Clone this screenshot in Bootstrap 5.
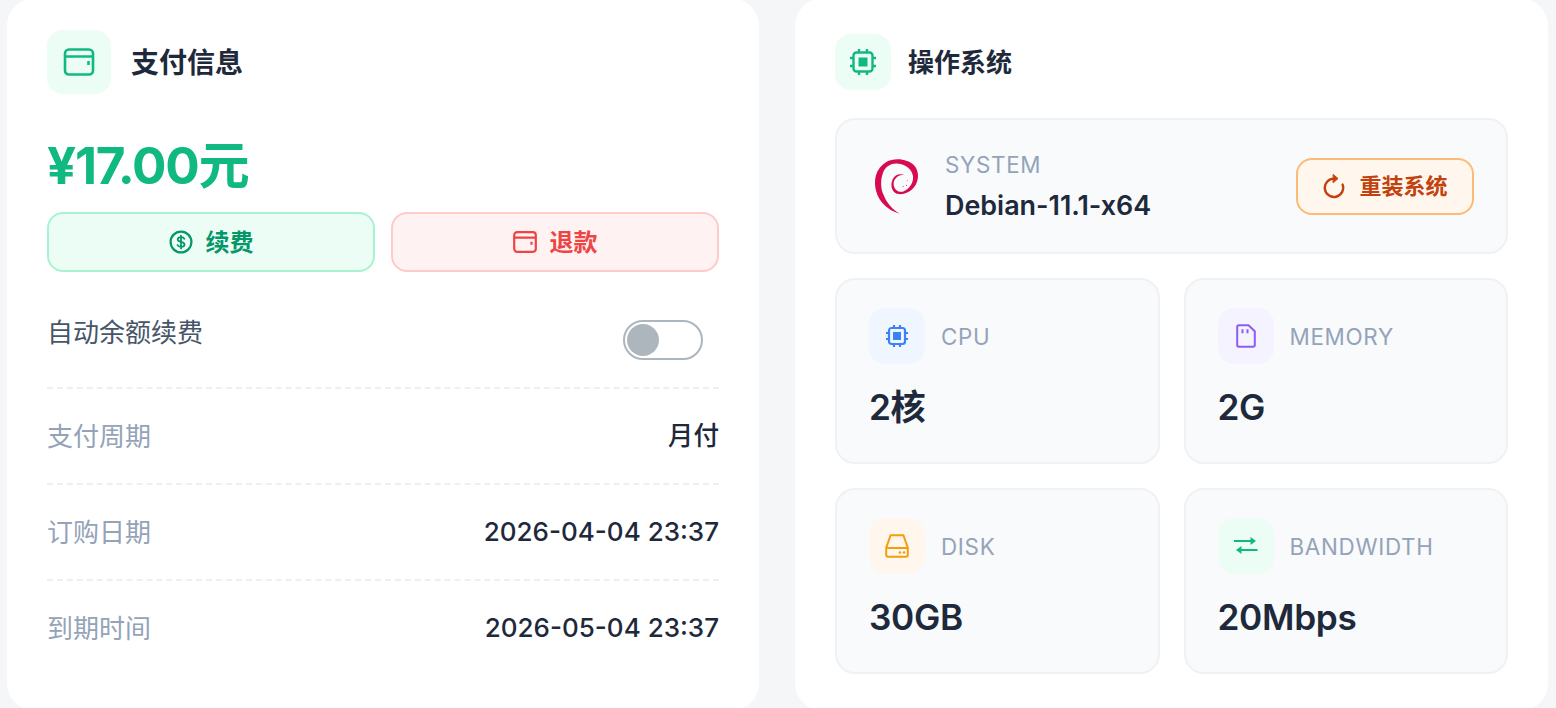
<!DOCTYPE html>
<html lang="zh-CN">
<head>
  <meta charset="UTF-8">
  <meta name="viewport" content="width=device-width, initial-scale=1.0">
  <title>支付信息</title>
  <link href="https://cdn.jsdelivr.net/npm/bootstrap@5.3.0/dist/css/bootstrap.min.css" rel="stylesheet">
  <style>
    html, body { height: 708px; overflow: hidden; }
    body { background: #f5f6f8; font-family: Inter, "Noto Sans CJK SC", sans-serif; color: #1e293b; }
    .panels { display: flex; gap: 36px; padding: 0 8px 0 7px; margin-top: -2px; }
    .panel { height: 713px; border: 0; border-radius: 28px; background: #fff; }
    .panel-left { flex: 0 0 752px; padding: 32px 40px; }
    .panel-right { flex: 1 1 0; padding: 36px 40px; }
    .head-icon { width: 64px; height: 64px; border-radius: 16px; background: #ecfdf5; color: #10b981; }
    .head-icon-sm { width: 56px; height: 56px; }
    .head-title { font-size: 28px; font-weight: 700; margin: 0 0 0 20px; padding-top: 4px; }
    .head-title-sm { font-size: 26px; margin-left: 17px; padding-top: 2px; }
    .price { font-size: 51.2px; font-weight: 700; letter-spacing: -0.025em; color: #10b981; line-height: 76px; margin: 33px 0 9px; }
    .act-btn { height: 60px; border-width: 2px; border-radius: 16px; font-size: 24px; font-weight: 700; gap: 13px; }
    .act-btn span { padding-top: 2px; }
    .act-green, .act-green:hover { background: #ecfdf5; border-color: #a7f3d0; color: #059669; }
    .act-red, .act-red:hover { background: #fef2f2; border-color: #fecaca; color: #ef4444; }
    .auto-row { margin-top: 42px; padding-bottom: 27px; border-bottom: 2px dashed #edf0f3; font-size: 26px; color: #475569; line-height: 38px; }
    .switch-wrap { margin: 6px 16px 0 0; padding: 0; min-height: 0; }
    .switch-wrap .form-check-input { width: 80px; height: 40px; margin: 0; float: none; display: block; border: 2px solid #adb5bd; background-image: url("data:image/svg+xml,%3csvg xmlns='http://www.w3.org/2000/svg' viewBox='-4 -4 8 8'%3e%3ccircle r='3.55' fill='%23adb5bd'/%3e%3c/svg%3e"); }
    .info-row { height: 96px; padding-bottom: 2px; font-size: 26px; border-bottom: 2px dashed #edf0f3; }
    .info-row:last-child { border-bottom-color: transparent; }
    .info-key { color: #94a3b8; padding-top: 2px; }
    .info-val { font-weight: 500; color: #1e293b; }
    .info-cjk { font-size: 25.6px; padding-top: 2px; }
    .sys-box { height: 136px; margin-top: 28px; padding: 0 32px 0 36px; background: #f8fafc; border: 2px solid #eff1f4; border-radius: 20px; }
    .sys-text { padding-top: 2px; }
    .sys-label { font-size: 22.4px; color: #94a3b8; letter-spacing: 0.7px; line-height: 30px; }
    .sys-name { font-size: 26.9px; font-weight: 600; line-height: 38px; margin-top: 6px; }
    .reinstall { height: 57px; width: 178px; border: 2px solid #fdba74; border-radius: 16px; background: #fff7ed; color: #c2410c; font-size: 22px; font-weight: 700; gap: 13px; padding: 0; }
    .reinstall:hover { background: #fff7ed; border-color: #fdba74; color: #c2410c; }
    .tiles { margin-top: 0; }
    .tile { height: 186px; padding: 28px 32px; background: #f8fafc; border: 2px solid #eff1f4; border-radius: 20px; }
    .tile-icon { width: 56px; height: 56px; border-radius: 16px; }
    .tile-label { font-size: 22.4px; color: #94a3b8; letter-spacing: 0.7px; margin-left: 16px; padding-top: 1px; }
    .tile-value { font-size: 35.2px; font-weight: 600; letter-spacing: -0.3px; line-height: 52px; margin-top: 17px; }
    .tone-blue { background: #eff6ff; color: #3b82f6; }
    .tone-purple { background: #f5f3ff; color: #8b5cf6; }
    .tone-orange { background: #fff7ed; color: #f59e0b; }
    .tone-green { background: #ecfdf5; color: #10b981; }
  </style>
</head>
<body>
  <div class="panels">
    <div class="card panel panel-left">
      <div class="d-flex align-items-center">
        <div class="head-icon d-flex align-items-center justify-content-center">
          <svg width="32" height="32" viewBox="0 0 32 32" fill="none" stroke="currentColor" stroke-width="2.6" stroke-linejoin="round"><rect x="2" y="3.5" width="28" height="25" rx="4"/><path d="M2 10.5h28M25.5 15v4"/></svg>
        </div>
        <h5 class="head-title">支付信息</h5>
      </div>
      <div class="price">¥17.00元</div>
      <div class="row g-3">
        <div class="col-6">
          <button class="btn act-btn act-green w-100 d-flex align-items-center justify-content-center">
            <svg width="24" height="24" viewBox="0 0 24 24" fill="none" stroke="currentColor" stroke-width="2.2" stroke-linecap="round"><circle cx="12" cy="12" r="10.4"/><path d="M15.4 8.8c-.5-1.1-1.8-1.7-3.4-1.7-1.9 0-3.3 1-3.3 2.4 0 3.2 6.8 1.7 6.8 5 0 1.4-1.5 2.4-3.5 2.4-1.7 0-3-.7-3.5-1.9M12 5.6v12.8" stroke-width="1.8"/></svg>
            <span>续费</span>
          </button>
        </div>
        <div class="col-6">
          <button class="btn act-btn act-red w-100 d-flex align-items-center justify-content-center">
            <svg width="24" height="22" viewBox="0 0 24 22" fill="none" stroke="currentColor" stroke-width="2.2" stroke-linejoin="round"><rect x="1.2" y="1.2" width="21.6" height="19.6" rx="3"/><path d="M1.2 6.6h21.6M18.5 10.8v3"/></svg>
            <span>退款</span>
          </button>
        </div>
      </div>
      <div class="auto-row d-flex justify-content-between align-items-start">
        <span>自动余额续费</span>
        <div class="form-check form-switch switch-wrap"><input class="form-check-input" type="checkbox" role="switch" aria-label="自动余额续费"></div>
      </div>
      <div class="info-row d-flex justify-content-between align-items-center"><span class="info-key">支付周期</span><span class="info-val info-cjk">月付</span></div>
      <div class="info-row d-flex justify-content-between align-items-center"><span class="info-key">订购日期</span><span class="info-val">2026-04-04 23:37</span></div>
      <div class="info-row d-flex justify-content-between align-items-center"><span class="info-key">到期时间</span><span class="info-val">2026-05-04 23:37</span></div>
    </div>

    <div class="card panel panel-right">
      <div class="d-flex align-items-center">
        <div class="head-icon head-icon-sm d-flex align-items-center justify-content-center">
          <svg width="28" height="28" viewBox="0 0 28 28" fill="none" stroke="currentColor" stroke-width="2.4"><rect x="4.5" y="4.5" width="19" height="19" rx="3"/><rect x="9.5" y="9.5" width="9" height="9" fill="currentColor" stroke="none"/><path d="M10 1v3M18 1v3M10 24v3M18 24v3M1 10h3M1 18h3M24 10h3M24 18h3"/></svg>
        </div>
        <h5 class="head-title head-title-sm">操作系统</h5>
      </div>
      <div class="sys-box d-flex align-items-center">
        <svg width="48" height="58" viewBox="40 35 145 175"><path fill="#d70a53" d="M120 206C90 198 60 175 50 140C40 105 48 70 80 50C105 36 146 40 166 62C180 80 179 106 165 125C152 143 128 151 112 146C96 140 92 120 99 103C106 88 122 83 136 90C124 87 112 92 104 106C98 122 108 139 122 140C140 141 158 122 161 101C163 80 147 62 124 56C100 50 78 60 70 83C62 105 63 130 72 150C82 175 100 195 120 206Z"/><circle cx="131" cy="124" r="1.6" fill="#d70a53"/><circle cx="141" cy="120" r="1.6" fill="#d70a53"/><circle cx="144" cy="106" r="1.4" fill="#d70a53"/></svg>
        <div class="sys-text ms-4 flex-grow-1">
          <div class="sys-label">SYSTEM</div>
          <div class="sys-name">Debian-11.1-x64</div>
        </div>
        <button class="btn reinstall d-flex align-items-center justify-content-center">
          <svg width="24" height="26" viewBox="0 0 24 26" fill="none" stroke="currentColor" stroke-width="2.4" stroke-linecap="round"><path d="M12 5.6A9.2 9.2 0 1 0 20.6 11.6"/><path d="M11.4 1.6l4.6 4-4.6 4z" fill="currentColor" stroke-width="1" stroke-linejoin="round"/></svg>
          <span>重装系统</span>
        </button>
      </div>
      <div class="row g-4 tiles">
        <div class="col-6">
          <div class="tile">
            <div class="d-flex align-items-center">
              <div class="tile-icon tone-blue d-flex align-items-center justify-content-center">
                <svg width="24" height="24" viewBox="0 0 24 24" fill="none" stroke="currentColor" stroke-width="2.2"><rect x="4" y="4" width="16" height="16" rx="2.5"/><rect x="8" y="8" width="8" height="8" fill="currentColor" stroke="none"/><path d="M9 1v3M15 1v3M9 20v3M15 20v3M1 9h3M1 15h3M20 9h3M20 15h3"/></svg>
              </div>
              <span class="tile-label">CPU</span>
            </div>
            <div class="tile-value">2核</div>
          </div>
        </div>
        <div class="col-6">
          <div class="tile">
            <div class="d-flex align-items-center">
              <div class="tile-icon tone-purple d-flex align-items-center justify-content-center">
                <svg width="20" height="24" viewBox="0 0 20 24" fill="none" stroke="currentColor" stroke-width="2" stroke-linejoin="round"><path d="M3 1.2h9.5l6.3 6V21a1.8 1.8 0 0 1-1.8 1.8H3A1.8 1.8 0 0 1 1.2 21V3A1.8 1.8 0 0 1 3 1.2z"/><path d="M6.5 5.2v4M11.5 5.2v4"/></svg>
              </div>
              <span class="tile-label">MEMORY</span>
            </div>
            <div class="tile-value">2G</div>
          </div>
        </div>
        <div class="col-6">
          <div class="tile">
            <div class="d-flex align-items-center">
              <div class="tile-icon tone-orange d-flex align-items-center justify-content-center">
                <svg width="24" height="24" viewBox="0 0 24 24" fill="none" stroke="currentColor" stroke-width="2" stroke-linejoin="round"><path d="M5.6 1.2h12.8l4.4 12.6v7a2 2 0 0 1-2 2H3.2a2 2 0 0 1-2-2v-7z"/><path d="M1.2 14h21.6"/><circle cx="15" cy="18.5" r="1.3" fill="currentColor" stroke="none"/><circle cx="19" cy="18.5" r="1.3" fill="currentColor" stroke="none"/></svg>
              </div>
              <span class="tile-label">DISK</span>
            </div>
            <div class="tile-value">30GB</div>
          </div>
        </div>
        <div class="col-6">
          <div class="tile">
            <div class="d-flex align-items-center">
              <div class="tile-icon tone-green d-flex align-items-center justify-content-center">
                <svg width="24" height="20" viewBox="0 0 24 20" fill="none" stroke="currentColor" stroke-width="2"><path d="M0 5h20M23.5 14H4"/><path d="M16.5 1l5.5 4-5.5 4zM7.5 10L2 14l5.5 4z" fill="currentColor" stroke="none"/></svg>
              </div>
              <span class="tile-label">BANDWIDTH</span>
            </div>
            <div class="tile-value">20Mbps</div>
          </div>
        </div>
      </div>
    </div>
  </div>
  <script src="https://cdn.jsdelivr.net/npm/bootstrap@5.3.0/dist/js/bootstrap.bundle.min.js"></script>
</body>
</html>
